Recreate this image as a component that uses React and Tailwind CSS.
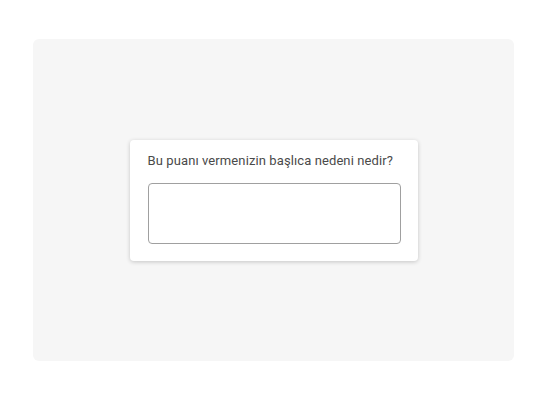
export default function App() {
  return (
    <div className="w-[547px] h-[400px] bg-white flex px-[33px] pt-[39px] pb-[39px]" style={{ fontFamily: 'Roboto, Arial, sans-serif' }}>
      <div className="flex-1 bg-[#f6f6f6] rounded-[6px] flex items-center justify-center">
        <div className="w-[288px] h-[121px] bg-white rounded-[4px] shadow-[0_1px_4px_rgba(0,0,0,0.2)] px-[18px] pt-[11px]">
          <div className="text-[13px] leading-[20px] text-[#4a4a4a] whitespace-nowrap tracking-[0.1px]">Bu puanı vermenizin başlıca nedeni nedir?</div>
          <textarea className="mt-[12px] block w-[253px] h-[61px] border border-[#a0a0a0] rounded-[4px] bg-white resize-none outline-none" />
        </div>
      </div>
    </div>
  );
}
